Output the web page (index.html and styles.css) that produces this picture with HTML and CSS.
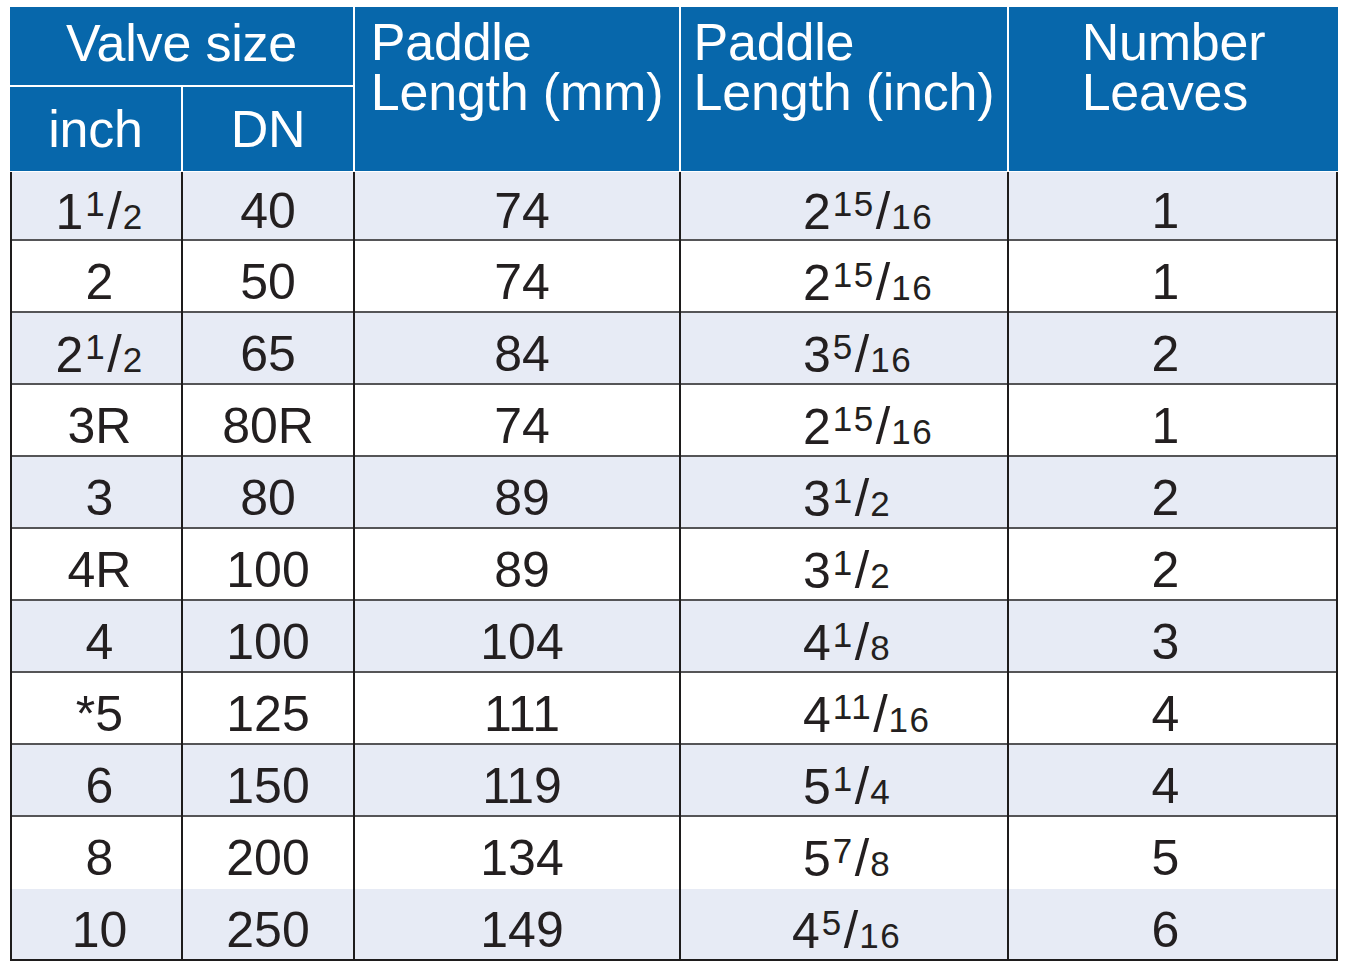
FILE: index.html
```html
<!DOCTYPE html>
<html lang="en">
<head>
<meta charset="utf-8">
<title>Valve paddle sizes</title>
<link rel="stylesheet" href="styles.css">
</head>
<body>
<div class="sheet">
  <div class="thead">
    <div class="hcell valve">Valve size</div>
    <div class="hcell tall"><div class="hblock">Paddle<br>Length (mm)</div></div>
    <div class="hcell tall"><div class="hblock">Paddle<br>Length (inch)</div></div>
    <div class="hcell tall"><div class="hblock">Number<br>Leaves</div></div>
    <div class="hcell sub">inch</div>
    <div class="hcell sub">DN</div>
  </div>
  <div class="tbody">
    <div class="row alt first">
      <div class="cell c1">1<span class="fn">1</span><span class="sl">/</span><span class="fd">2</span></div>
      <div class="cell c2">40</div>
      <div class="cell c3">74</div>
      <div class="cell c4">2<span class="fn">15</span><span class="sl">/</span><span class="fd">16</span></div>
      <div class="cell c5">1</div>
    </div>
    <div class="row">
      <div class="cell c1">2</div>
      <div class="cell c2">50</div>
      <div class="cell c3">74</div>
      <div class="cell c4">2<span class="fn">15</span><span class="sl">/</span><span class="fd">16</span></div>
      <div class="cell c5">1</div>
    </div>
    <div class="row alt">
      <div class="cell c1">2<span class="fn">1</span><span class="sl">/</span><span class="fd">2</span></div>
      <div class="cell c2">65</div>
      <div class="cell c3">84</div>
      <div class="cell c4">3<span class="fn">5</span><span class="sl">/</span><span class="fd">16</span></div>
      <div class="cell c5">2</div>
    </div>
    <div class="row">
      <div class="cell c1">3R</div>
      <div class="cell c2">80R</div>
      <div class="cell c3">74</div>
      <div class="cell c4">2<span class="fn">15</span><span class="sl">/</span><span class="fd">16</span></div>
      <div class="cell c5">1</div>
    </div>
    <div class="row alt">
      <div class="cell c1">3</div>
      <div class="cell c2">80</div>
      <div class="cell c3">89</div>
      <div class="cell c4">3<span class="fn">1</span><span class="sl">/</span><span class="fd">2</span></div>
      <div class="cell c5">2</div>
    </div>
    <div class="row">
      <div class="cell c1">4R</div>
      <div class="cell c2">100</div>
      <div class="cell c3">89</div>
      <div class="cell c4">3<span class="fn">1</span><span class="sl">/</span><span class="fd">2</span></div>
      <div class="cell c5">2</div>
    </div>
    <div class="row alt">
      <div class="cell c1">4</div>
      <div class="cell c2">100</div>
      <div class="cell c3">104</div>
      <div class="cell c4">4<span class="fn">1</span><span class="sl">/</span><span class="fd">8</span></div>
      <div class="cell c5">3</div>
    </div>
    <div class="row">
      <div class="cell c1">*5</div>
      <div class="cell c2">125</div>
      <div class="cell c3">111</div>
      <div class="cell c4">4<span class="fn">11</span><span class="sl">/</span><span class="fd">16</span></div>
      <div class="cell c5">4</div>
    </div>
    <div class="row alt">
      <div class="cell c1">6</div>
      <div class="cell c2">150</div>
      <div class="cell c3">119</div>
      <div class="cell c4">5<span class="fn">1</span><span class="sl">/</span><span class="fd">4</span></div>
      <div class="cell c5">4</div>
    </div>
    <div class="row noline">
      <div class="cell c1">8</div>
      <div class="cell c2">200</div>
      <div class="cell c3">134</div>
      <div class="cell c4">5<span class="fn">7</span><span class="sl">/</span><span class="fd">8</span></div>
      <div class="cell c5">5</div>
    </div>
    <div class="row alt last">
      <div class="cell c1">10</div>
      <div class="cell c2">250</div>
      <div class="cell c3">149</div>
      <div class="cell c4 nudge">4<span class="fn">5</span><span class="sl">/</span><span class="fd">16</span></div>
      <div class="cell c5">6</div>
    </div>
  </div>
</div>
</body>
</html>
```

FILE: styles.css
```css
* {
  box-sizing: border-box;
}

html, body {
  margin: 0;
  padding: 0;
  background: #ffffff;
}

body {
  font-family: "Liberation Sans", Arial, Helvetica, sans-serif;
  color: #231f20;
}

.sheet {
  width: 1350px;
  padding: 7px 0 0 10px;
}

/* ---------- header ---------- */
.thead {
  width: 1328px;
  display: grid;
  grid-template-columns: 171px 170px 324px 326px 329px;
  grid-template-rows: 78px 84px;
  column-gap: 2px;
  row-gap: 2px;
  background: #ffffff;
  margin-bottom: 1px;
}

.hcell {
  background: #0767ab;
  color: #ffffff;
  font-size: 52px;
  line-height: 50px;
  letter-spacing: -0.2px;
}

.valve {
  grid-column: 1 / 3;
  grid-row: 1;
  text-align: center;
  padding-top: 11px;
}

.tall {
  grid-row: 1 / 3;
  display: flex;
  justify-content: center;
  align-items: flex-start;
  padding-top: 10px;
}

.hblock {
  text-align: left;
  white-space: nowrap;
}

.sub {
  grid-row: 2;
  text-align: center;
  padding-top: 17px;
}

/* ---------- body ---------- */
.tbody {
  width: 1328px;
  border-left: 2px solid #1e1c1c;
  border-right: 2px solid #1e1c1c;
  border-bottom: 2px solid #1e1c1c;
}

.row {
  display: grid;
  grid-template-columns: 171px 172px 326px 328px 327px;
  height: 72px;
  border-bottom: 2px solid #555557;
  background: #ffffff;
}

.row.alt {
  background: #e7ebf5;
}

.row.first {
  height: 69px;
}

.row.noline {
  border-bottom: none;
}

.row.last {
  border-bottom: none;
  height: 70px;
}

.cell {
  display: flex;
  align-items: baseline;
  justify-content: center;
  padding-top: 16px;
  font-size: 50px;
  line-height: 50px;
  white-space: nowrap;
  border-right: 2px solid #1e1c1c;
}

.row.first .cell {
  padding-top: 14px;
}

.cell.c5 {
  border-right: none;
  padding-right: 14px;
}

.c1 {
  padding-left: 6px;
}

.c3 {
  padding-left: 10px;
}

.c4 {
  justify-content: flex-start;
  padding-left: 122px;
}

.c4.nudge {
  padding-left: 111px;
}

.fn,
.fd {
  font-size: 35px;
  letter-spacing: 1.5px;
}

.fn {
  position: relative;
  top: -13px;
  margin-left: 2px;
}

.sl {
  font-size: 52px;
  margin: 0 1px;
}
```
